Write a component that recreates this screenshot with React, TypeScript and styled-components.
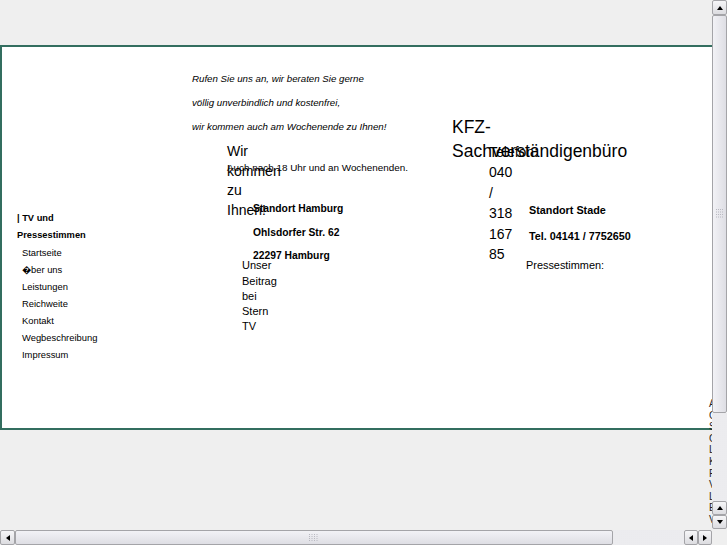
import styled, { createGlobalStyle } from 'styled-components'

const GlobalStyle = createGlobalStyle`
  html, body {
    margin: 0;
    padding: 0;
    overflow: hidden;
    background: #efefef;
  }
  body {
    font-family: "Liberation Sans", Arial, Helvetica, sans-serif;
    color: #000;
  }
`

const navItems = ['Startseite', '\uFFFDber uns', 'Leistungen', 'Reichweite', 'Kontakt', 'Wegbeschreibung', 'Impressum']
const edgeLetters = ['A', 'C', 'S', 'C', 'L', 'K', 'F', 'V', 'L', 'E', 'V']

const Arrow = ({ dir }: { dir: 'up' | 'down' | 'left' | 'right' }) => {
    const pts = {
        up: '1,6 4,2 7,6',
        down: '1,2 4,6 7,2',
        left: '6,1 2,4 6,7',
        right: '2,1 6,4 2,7',
    }[dir]
    return (
        <svg width="8" height="8" viewBox="0 0 8 8">
            <polygon points={pts} fill="#000" />
        </svg>
    )
}

const Grip = ({ vertical }: { vertical?: boolean }) => {
    const dots = []
    for (let r = 0; r < 4; r++) {
        for (let c = 0; c < 4; c++) {
            dots.push(<rect key={r + '-' + c} x={vertical ? c * 2 : c * 2.5} y={vertical ? r * 2.5 : r * 2} width="1" height="1" fill="#b8b8c0" />)
        }
    }
    return (
        <svg width={vertical ? 8 : 10} height={vertical ? 10 : 8}>
            {dots}
        </svg>
    )
}

const App = () => {
    return (
        <>
        <GlobalStyle />
        <Page>
            <Frame>
                <Nav>
                    <NavHead>| TV und Pressestimmen</NavHead>
                    {navItems.map((item) => (
                        <NavLink key={item} href="#">{item}</NavLink>
                    ))}
                </Nav>
                <Middle>
                    <Slogan>Rufen Sie uns an, wir beraten Sie gerne</Slogan>
                    <Slogan>völlig unverbindlich und kostenfrei,</Slogan>
                    <Slogan>wir kommen auch am Wochenende zu Ihnen!</Slogan>
                    <Invite>Wir kommen zu Ihnen!</Invite>
                    <Hours>Auch nach 18 Uhr und an Wochenenden.</Hours>
                    <Address>
                        <div>Standort Hamburg</div>
                        <div>Ohlsdorfer Str. 62</div>
                        <div>22297 Hamburg</div>
                    </Address>
                    <Press>Unser Beitrag bei Stern TV</Press>
                </Middle>
                <Right>
                    <Title>KFZ-Sachverständigenbüro</Title>
                    <ContactRow>
                        <Phone>Telefon: 040 / 318 167 85</Phone>
                        <Stade>
                            <StadeLine>Standort Stade</StadeLine>
                            <StadeLine>Tel. 04141 / 7752650</StadeLine>
                            <PressLabel>Pressestimmen:</PressLabel>
                        </Stade>
                    </ContactRow>
                </Right>
            </Frame>
            <EdgeColumn>
                {edgeLetters.map((l, i) => (
                    <div key={i}>{l}</div>
                ))}
            </EdgeColumn>
            <VScroll>
                <ScrollBtn><Arrow dir="up" /></ScrollBtn>
                <VThumb><Grip vertical /></VThumb>
                <Track />
                <ScrollBtn $small><Arrow dir="up" /></ScrollBtn>
                <ScrollBtn $small><Arrow dir="down" /></ScrollBtn>
            </VScroll>
            <HScroll>
                <ScrollBtn><Arrow dir="left" /></ScrollBtn>
                <HThumb><Grip /></HThumb>
                <Track />
                <ScrollBtn $small><Arrow dir="left" /></ScrollBtn>
                <ScrollBtn $small><Arrow dir="right" /></ScrollBtn>
            </HScroll>
        </Page>
        </>
    )
}

export default App

const Page = styled.div`
    position: relative;
    width: 727px;
    height: 545px;
    overflow: hidden;
    padding-top: 45px;
    box-sizing: border-box;
`

const Frame = styled.div`
    box-sizing: border-box;
    width: 760px;
    height: 385px;
    border: 2px solid #336e5f;
    background: #fff;
    display: flex;
    align-items: flex-start;
`

const Nav = styled.nav`
    flex: none;
    width: 190px;
    padding: 162.5px 0 0 15px;
    box-sizing: border-box;
`

const NavHead = styled.div`
    width: 90px;
    font-size: 9.3px;
    font-weight: bold;
    line-height: 17px;
`

const NavLink = styled.a`
    display: block;
    margin-left: 5px;
    font-size: 9.4px;
    line-height: 17px;
    color: #000;
    text-decoration: none;
    white-space: nowrap;
`

const Middle = styled.div`
    flex: none;
    width: 260px;
    padding-top: 20px;
    box-sizing: border-box;
`

const Slogan = styled.p`
    margin: 0;
    font-size: 9.7px;
    font-style: italic;
    line-height: 24px;
    white-space: nowrap;
`

const Invite = styled.div`
    margin: 3.3px 0 0 35px;
    width: 55px;
    font-size: 14px;
    line-height: 19.4px;
`

const Hours = styled.p`
    margin: -58.9px 0 0 35px;
    font-size: 9.9px;
    line-height: 14px;
    white-space: nowrap;
`

const Address = styled.div`
    margin: 22.25px 0 0 61px;
    font-size: 10.3px;
    font-weight: bold;
    line-height: 23.5px;
    white-space: nowrap;
`

const Press = styled.div`
    margin: -9.35px 0 0 50px;
    width: 40px;
    font-size: 11px;
    line-height: 15.25px;
`

const Right = styled.div`
    flex: 1;
    padding-top: 68px;
`

const Title = styled.h1`
    margin: 0;
    width: 185px;
    font-size: 17.5px;
    font-weight: normal;
    line-height: 24px;
`

const ContactRow = styled.div`
    display: flex;
    align-items: flex-start;
    margin-top: -22.2px;
`

const Phone = styled.div`
    flex: none;
    margin: 1px 0 0 37px;
    width: 28px;
    font-size: 14px;
    line-height: 20.5px;
`

const Stade = styled.div`
    margin-left: 12px;
    padding-top: 56.2px;
`

const StadeLine = styled.div`
    font-size: 10.8px;
    font-weight: bold;
    line-height: 26px;
    white-space: nowrap;
`

const PressLabel = styled.div`
    margin: 9px 0 0 -3px;
    font-size: 10.9px;
    line-height: 14px;
`

const EdgeColumn = styled.div`
    position: absolute;
    left: 709px;
    top: 398px;
    font-size: 10px;
    line-height: 11.6px;
    color: #222;
`

const VScroll = styled.div`
    position: absolute;
    top: 0;
    right: 0;
    width: 15px;
    height: 529px;
    display: flex;
    flex-direction: column;
`

const HScroll = styled.div`
    position: absolute;
    left: 0;
    bottom: 0;
    width: 712px;
    height: 15px;
    display: flex;
`

const ScrollBtn = styled.div<{ $small?: boolean }>`
    flex: none;
    width: ${(p) => (p.$small ? '14px' : '15px')};
    height: ${(p) => (p.$small ? '14px' : '15px')};
    ${VScroll} & {
        width: 15px;
    }
    ${HScroll} & {
        height: 15px;
    }
    box-sizing: border-box;
    border: 1px solid #a4a4a8;
    border-radius: 2px;
    background: linear-gradient(#f6f6f8, #dcdce0);
    display: flex;
    align-items: center;
    justify-content: center;
`

const Track = styled.div`
    flex: 1;
    background-color: #f4f4f6;
    background-image: radial-gradient(#e2e2e6 0.6px, transparent 0.8px);
    background-size: 2px 2px;
`

const VThumb = styled.div`
    flex: none;
    height: 398px;
    box-sizing: border-box;
    border: 1px solid #a4a4a8;
    border-radius: 2px;
    background: linear-gradient(to right, #f2f2f6, #dedee4);
    display: flex;
    align-items: center;
    justify-content: center;
`

const HThumb = styled.div`
    flex: none;
    width: 598px;
    box-sizing: border-box;
    border: 1px solid #a4a4a8;
    border-radius: 2px;
    background: linear-gradient(#f2f2f6, #dedee4);
    display: flex;
    align-items: center;
    justify-content: center;
`
